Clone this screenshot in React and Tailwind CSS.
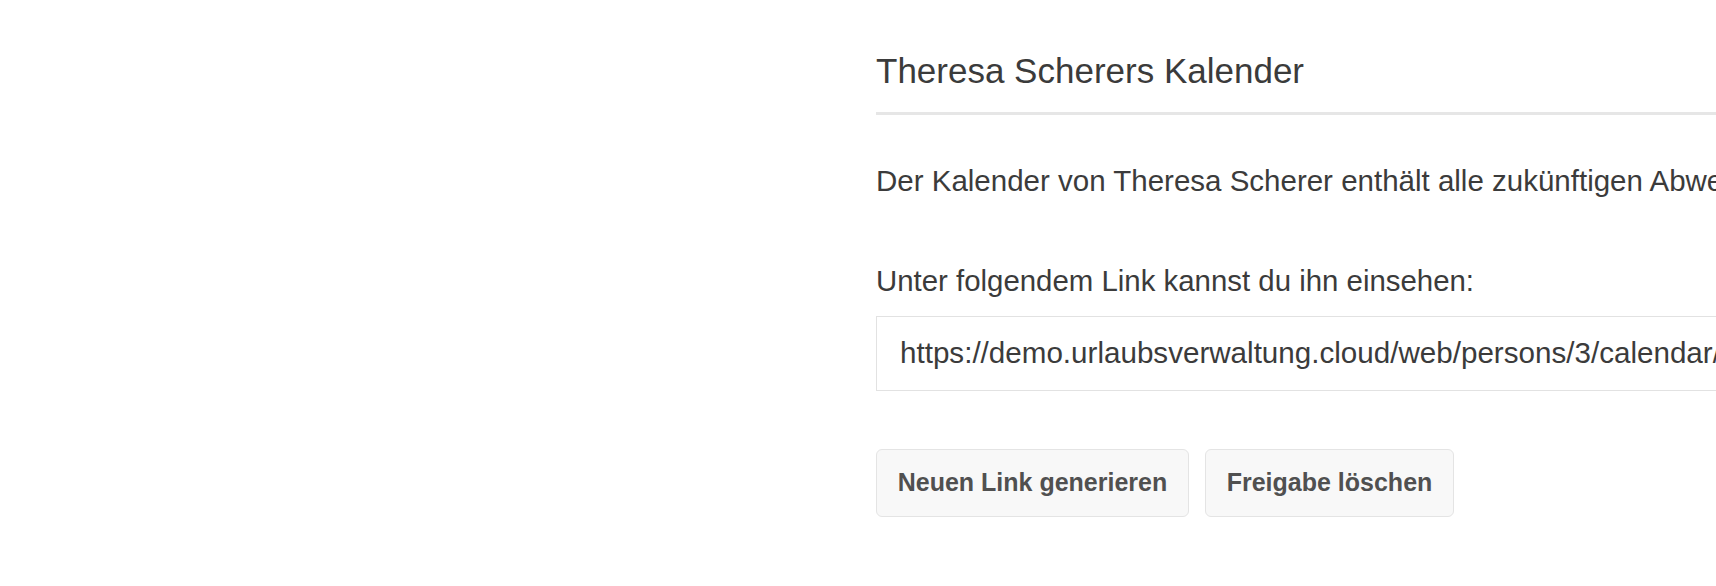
export default function App() {
  return (
    <div className="w-[1716px] h-[586px] overflow-hidden bg-white flex font-['Liberation_Sans',Arial,sans-serif] text-[#3b3b3b]">
      <div className="w-[876px] shrink-0" />
      <div className="w-[1100px] shrink-0 pt-[50px]">
        <h2 className="text-[35px] leading-[42px] font-normal pb-[20px] border-b-[3px] border-[#e6e6e6] whitespace-nowrap">
          Theresa Scherers Kalender
        </h2>
        <p className="mt-[45px] text-[29.5px] leading-[42px] whitespace-nowrap">
          Der Kalender von Theresa Scherer enthält alle zukünftigen Abwesenheiten.
        </p>
        <p className="mt-[58px] text-[29.4px] leading-[42px] whitespace-nowrap">
          Unter folgendem Link kannst du ihn einsehen:
        </p>
        <div className="mt-[14px] h-[75px] border border-[#e2e2e2] flex items-center pl-[23px] text-[29.6px] whitespace-nowrap overflow-hidden">
          https://demo.urlaubsverwaltung.cloud/web/persons/3/calendar/ical?secret=8a1f3c
        </div>
        <div className="mt-[58px] flex gap-[16px]">
          <button className="h-[68px] w-[313px] rounded-[6px] border border-[#e4e4e4] bg-[#f8f8f8] text-[25px] font-bold text-[#505050]">
            Neuen Link generieren
          </button>
          <button className="h-[68px] w-[249px] rounded-[6px] border border-[#e4e4e4] bg-[#f8f8f8] text-[25px] font-bold text-[#505050]">
            Freigabe löschen
          </button>
        </div>
      </div>
    </div>
  );
}
